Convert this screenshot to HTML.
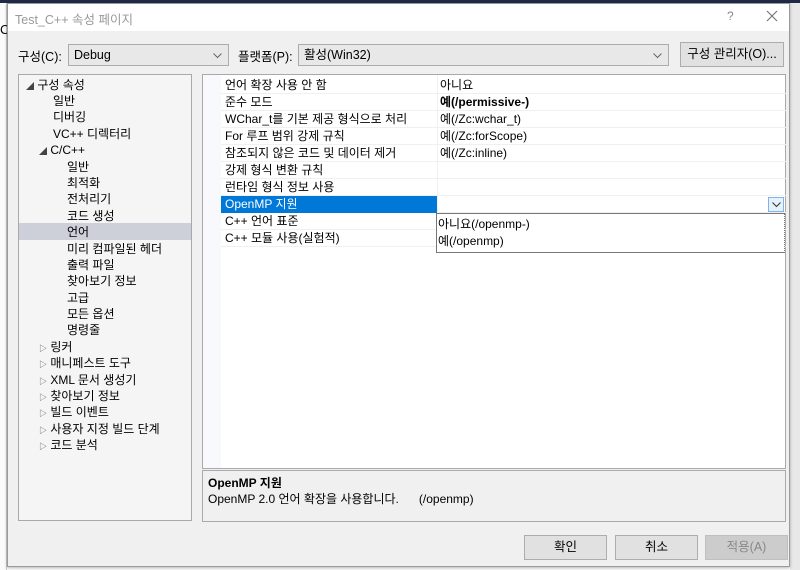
<!DOCTYPE html><html><head><meta charset="utf-8"><style>
*{margin:0;padding:0;box-sizing:border-box}
body{width:800px;height:570px;overflow:hidden;background:#fff;font-family:"Liberation Sans","Noto Sans CJK KR",sans-serif;font-size:12px;color:#000;position:relative}
.a{position:absolute;white-space:nowrap}
.combo{position:absolute;background:#e8e8e8;border:1px solid #acacac;height:22px;line-height:20px;padding-left:5px;font-size:12.5px}
.combo svg{position:absolute;right:6px;top:8px}
.btn{position:absolute;background:#e1e1e1;border:1px solid #adadad;text-align:center;line-height:23px;font-size:12.5px}
.tree div{position:absolute;height:16px;line-height:16px;font-size:12px}
.g div.r{position:absolute;left:18px;width:565px;height:17px;border-bottom:1px solid #f0f0f0;line-height:16px}
.g span{position:absolute}
</style></head><body>
<div class="a" style="left:0;top:0;width:800px;height:3px;background:#1f2b45"></div>
<div class="a" style="left:0;top:3px;width:7px;height:567px;background:#fbfbfb;border-right:1px solid #ccc"></div>
<div class="a" style="left:0;top:22px;font-size:13px">C</div>
<div class="a" style="left:790px;top:3px;width:10px;height:567px;background:#e8e8e8"></div>
<div class="a" style="left:7px;top:3px;width:783px;height:564px;background:#f0f0f0;border:1px solid #9a9a9a;box-shadow:0 1px 3px rgba(0,0,0,.3)"></div>
<div class="a" style="left:8px;top:4px;width:781px;height:27px;background:#fff"></div>
<div class="a" style="left:15px;top:9px;color:#999;font-size:12.5px">Test_C++ 속성 페이지</div>
<div class="a" style="left:727px;top:9px;color:#888;font-size:12px">?</div>
<svg class="a" style="left:766px;top:10px" width="12" height="12"><path d="M1 1L11 11M11 1L1 11" stroke="#777" stroke-width="1.2"/></svg>

<div class="a" style="left:18px;top:46px;font-size:12.5px">구성(C):</div>
<div class="combo" style="left:68px;top:44px;width:161px">Debug<svg width="9" height="6"><path d="M.5 .5L4.5 4.5L8.5 .5" stroke="#666" fill="none"/></svg></div>
<div class="a" style="left:238px;top:46px;font-size:12.5px">플랫폼(P):</div>
<div class="combo" style="left:298px;top:44px;width:371px">활성(Win32)<svg width="9" height="6"><path d="M.5 .5L4.5 4.5L8.5 .5" stroke="#666" fill="none"/></svg></div>
<div class="btn" style="left:680px;top:42px;width:104px;height:25px">구성 관리자(O)...</div>

<div class="a tree" style="left:18px;top:74px;width:174px;height:447px;background:#f5f5f5;border:1px solid #a9a9a9">
<div style="left:0;top:148px;width:172px;height:17px;background:#cdd0d8"></div>
<div style="left:7px;top:2px"><span style="font-size:8px;color:#444">◢</span> 구성 속성</div>
<div style="left:34px;top:18px">일반</div>
<div style="left:34px;top:34px">디버깅</div>
<div style="left:34px;top:51px">VC++ 디렉터리</div>
<div style="left:20px;top:67px"><span style="font-size:8px;color:#444">◢</span> C/C++</div>
<div style="left:48px;top:84px">일반</div>
<div style="left:48px;top:100px">최적화</div>
<div style="left:48px;top:116px">전처리기</div>
<div style="left:48px;top:133px">코드 생성</div>
<div style="left:48px;top:149px">언어</div>
<div style="left:48px;top:166px">미리 컴파일된 헤더</div>
<div style="left:48px;top:182px">출력 파일</div>
<div style="left:48px;top:198px">찾아보기 정보</div>
<div style="left:48px;top:215px">고급</div>
<div style="left:48px;top:231px">모든 옵션</div>
<div style="left:48px;top:247px">명령줄</div>
<div style="left:20px;top:264px"><span style="font-size:8px;color:#555">▷</span> 링커</div>
<div style="left:20px;top:280px"><span style="font-size:8px;color:#555">▷</span> 매니페스트 도구</div>
<div style="left:20px;top:297px"><span style="font-size:8px;color:#555">▷</span> XML 문서 생성기</div>
<div style="left:20px;top:313px"><span style="font-size:8px;color:#555">▷</span> 찾아보기 정보</div>
<div style="left:20px;top:329px"><span style="font-size:8px;color:#555">▷</span> 빌드 이벤트</div>
<div style="left:20px;top:346px"><span style="font-size:8px;color:#555">▷</span> 사용자 지정 빌드 단계</div>
<div style="left:20px;top:362px"><span style="font-size:8px;color:#555">▷</span> 코드 분석</div>
</div>

<div class="a g" style="left:202px;top:74px;width:584px;height:395px;background:#fff;border:1px solid #a9a9a9">
<div class="a" style="left:0;top:0;width:18px;height:393px;background:#f7f9fc"></div>
<div class="a" style="left:234px;top:0;width:1px;height:170px;background:#f0f0f0"></div>
<div class="r" style="top:2px"><span style="left:4px">언어 확장 사용 안 함</span><span style="left:219px">아니요</span></div>
<div class="r" style="top:19px"><span style="left:4px">준수 모드</span><span style="left:219px;font-weight:bold">예(/permissive-)</span></div>
<div class="r" style="top:36px"><span style="left:4px">WChar_t를 기본 제공 형식으로 처리</span><span style="left:219px">예(/Zc:wchar_t)</span></div>
<div class="r" style="top:53px"><span style="left:4px">For 루프 범위 강제 규칙</span><span style="left:219px">예(/Zc:forScope)</span></div>
<div class="r" style="top:70px"><span style="left:4px">참조되지 않은 코드 및 데이터 제거</span><span style="left:219px">예(/Zc:inline)</span></div>
<div class="r" style="top:87px"><span style="left:4px">강제 형식 변환 규칙</span></div>
<div class="r" style="top:104px"><span style="left:4px">런타임 형식 정보 사용</span></div>
<div class="r" style="top:121px"><span style="left:0;width:216px;height:17px;background:#0078d7;color:#fff;padding-left:4px">OpenMP 지원</span>
<span style="left:547px;top:1px;width:16px;height:15px;border:1px solid #7eb4ea;background:#e5f1fb"><svg style="position:absolute;left:3px;top:4px" width="9" height="6"><path d="M.5 .5L4.5 4.5L8.5 .5" stroke="#333" fill="none"/></svg></span></div>
<div class="r" style="top:138px"><span style="left:4px">C++ 언어 표준</span></div>
<div class="r" style="top:155px"><span style="left:4px">C++ 모듈 사용(실험적)</span></div>
<div class="a" style="left:233px;top:138px;width:349px;height:40px;background:#fff;border:1px solid #777;border-right:1px dotted #777">
<div class="a" style="left:1px;top:1px">아니요(/openmp-)</div>
<div class="a" style="left:1px;top:18px">예(/openmp)</div>
</div>
</div>

<div class="a" style="left:202px;top:470px;width:584px;height:52px;background:#f0f0f0;border:1px solid #a9a9a9">
<div class="a" style="left:5px;top:3px;font-weight:bold">OpenMP 지원</div>
<div class="a" style="left:5px;top:19px">OpenMP 2.0 언어 확장을 사용합니다.&nbsp;&nbsp;&nbsp;&nbsp;&nbsp;&nbsp;(/openmp)</div>
</div>

<div class="btn" style="left:524px;top:535px;width:83px;height:25px">확인</div>
<div class="btn" style="left:615px;top:535px;width:83px;height:25px">취소</div>
<div class="btn" style="left:705px;top:535px;width:83px;height:25px;background:#ccc;border-color:#bfbfbf;color:#888">적용(A)</div>
</body></html>
